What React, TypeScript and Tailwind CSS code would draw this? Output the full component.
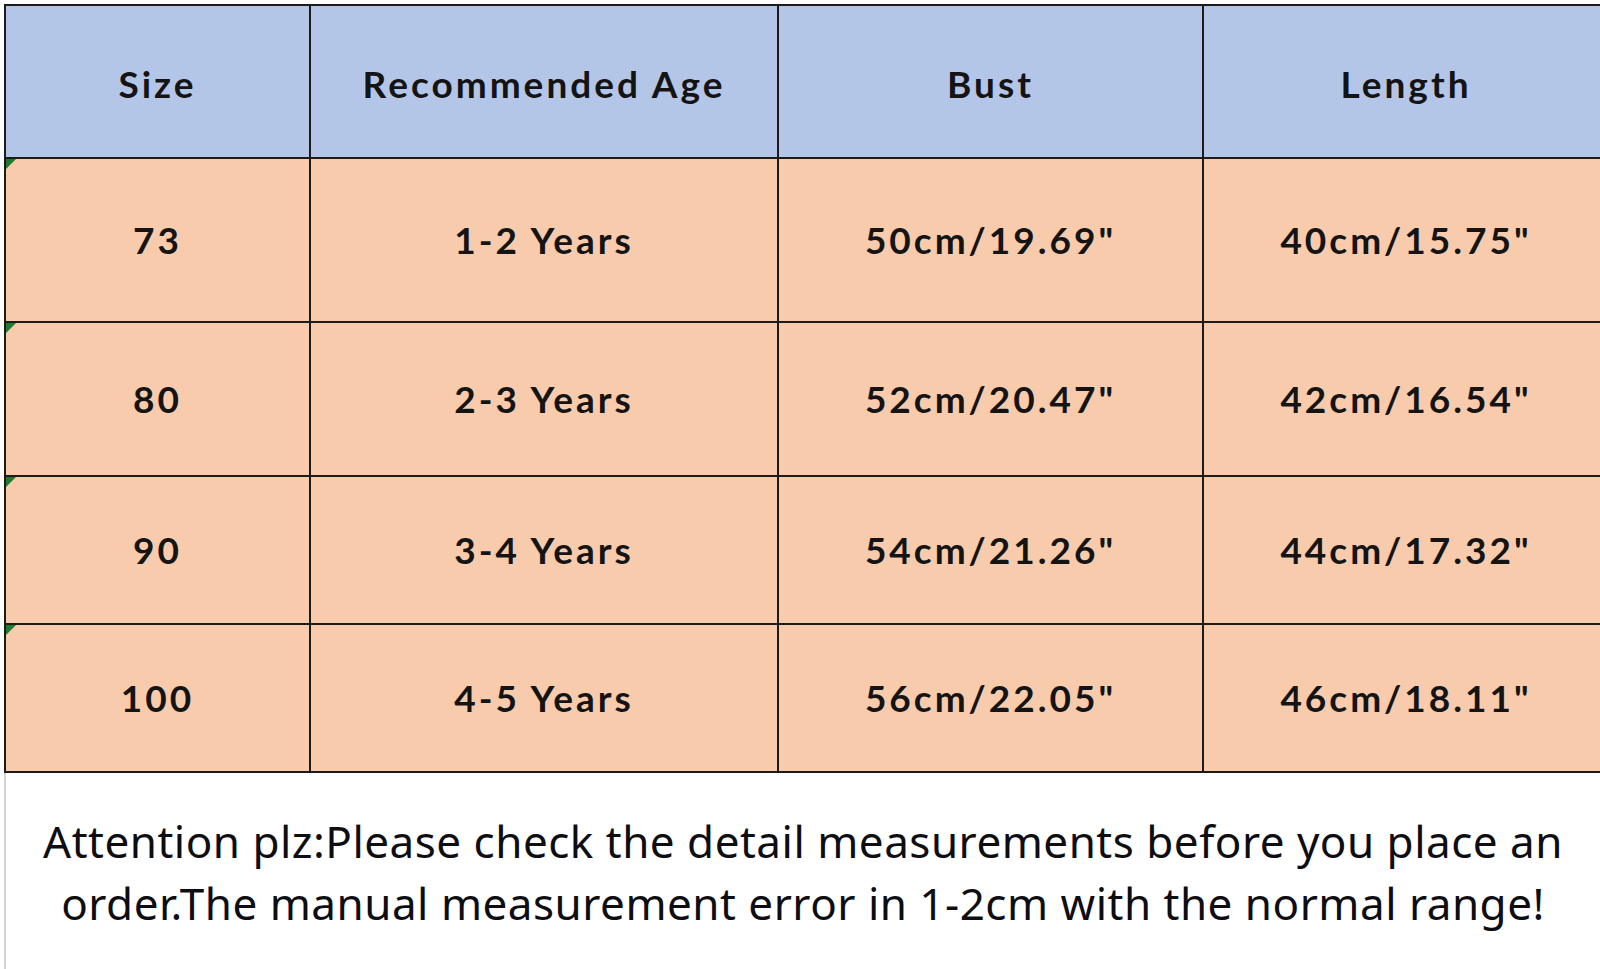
const rows = [
  { size: "73", age: "1-2 Years", bust: '50cm/19.69"', length: '40cm/15.75"', h: "h-[164px]" },
  { size: "80", age: "2-3 Years", bust: '52cm/20.47"', length: '42cm/16.54"', h: "h-[154px]" },
  { size: "90", age: "3-4 Years", bust: '54cm/21.26"', length: '44cm/17.32"', h: "h-[148px]" },
  { size: "100", age: "4-5 Years", bust: '56cm/22.05"', length: '46cm/18.11"', h: "h-[148px]" },
];

const cell = "border-2 border-[#1d1a1a] text-center align-middle p-0";

export default function App() {
  return (
    <div className="w-[1600px] h-[969px] overflow-hidden bg-white">
      <div className="pl-[4px] pt-[4px] overflow-hidden">
        <table
          className="border-collapse table-fixed w-[1700px] text-[#141414] font-bold text-[37px] tracking-[3px]"
          style={{ fontFamily: "Lato, 'Open Sans', sans-serif" }}
        >
          <colgroup>
            <col className="w-[305px]" />
            <col className="w-[468px]" />
            <col className="w-[425px]" />
            <col />
          </colgroup>
          <thead>
            <tr className="h-[153px] bg-[#b4c6e7]">
              <th className={`${cell} font-bold pt-[4px]`}>Size</th>
              <th className={`${cell} font-bold pt-[4px]`}>Recommended Age</th>
              <th className={`${cell} font-bold pt-[4px]`}>Bust</th>
              <th className={`${cell} font-bold pt-[4px] text-left`}>
                <span className="inline-block w-[404px] text-center">Length</span>
              </th>
            </tr>
          </thead>
          <tbody>
            {rows.map((r) => (
              <tr key={r.size} className={`${r.h} bg-[#f8cbad]`}>
                <td className={`${cell} relative`}>
                  <span className="absolute left-0 top-0 w-0 h-0 border-t-[10px] border-r-[10px] border-t-[#1e7a2e] border-r-transparent" />
                  {r.size}
                </td>
                <td className={cell}>{r.age}</td>
                <td className={cell}>{r.bust}</td>
                <td className={`${cell} text-left`}>
                  <span className="inline-block w-[404px] text-center">{r.length}</span>
                </td>
              </tr>
            ))}
          </tbody>
        </table>
      </div>
      <div className="ml-[4px] border-l-2 border-[#d4d4d4] h-[200px] pt-[37px]">
        <p
          className="text-center text-[44px] leading-[62px] tracking-[0.5px] text-[#0d0d12] px-[20px]"
          style={{ fontFamily: "'Noto Sans', 'Open Sans', sans-serif" }}
        >
          Attention plz:Please check the detail measurements before you place an
          <br />
          order.The manual measurement error in 1-2cm with the normal range!
        </p>
      </div>
    </div>
  );
}
